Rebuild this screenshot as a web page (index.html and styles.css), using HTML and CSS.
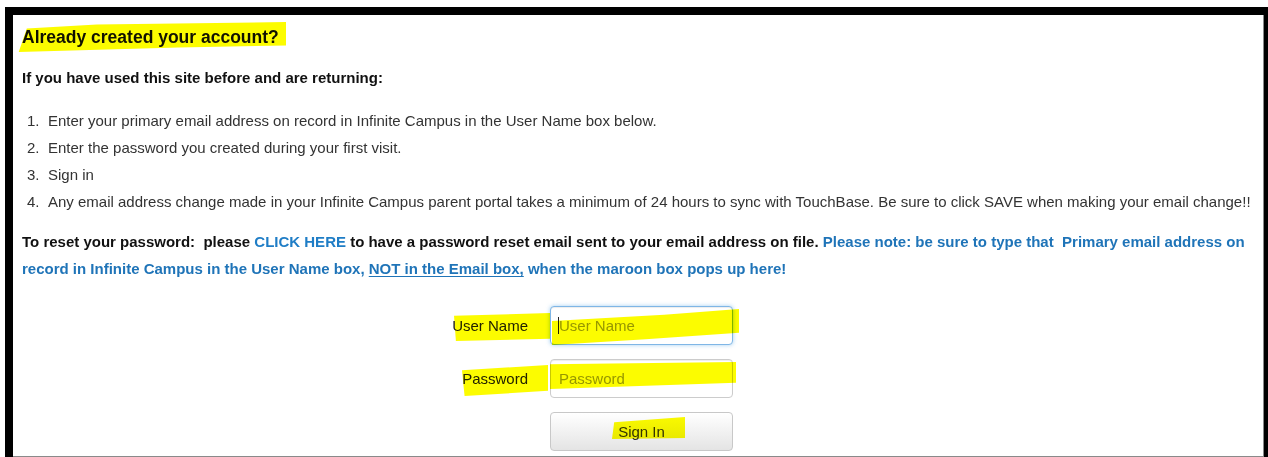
FILE: index.html
```html
<!DOCTYPE html>
<html lang="en">
<head>
<meta charset="utf-8">
<title>Sign In</title>
<link rel="stylesheet" href="styles.css">
</head>
<body>
<div class="frame">
  <div class="panel">
    <h3 class="title">Already created your account?</h3>
    <p class="intro">If you have used this site before and are returning:</p>
    <ol class="steps">
      <li>Enter your primary email address on record in Infinite Campus in the User Name box below.</li>
      <li>Enter the password you created during your first visit.</li>
      <li>Sign in</li>
      <li>Any email address change made in your Infinite Campus parent portal takes a minimum of 24 hours to sync with TouchBase. Be sure to click SAVE when making your email change!!</li>
    </ol>
    <p class="reset">To reset your password:&nbsp; please <a class="link" href="#">CLICK HERE</a> to have a password reset email sent to your email address on file. <span class="note">Please note: be sure to type that&nbsp; Primary email address on</span> <span class="note">record in Infinite Campus in the User Name box,</span> <u class="note">NOT in the Email box,</u> <span class="note">when the maroon box pops up here!</span></p>

    <form class="login">
      <label class="label" for="user">User Name</label>
      <span class="field">
        <input class="input is-focused" id="user" type="text" placeholder="User Name">
        <span class="caret"></span>
      </span>
      <label class="label" for="pass">Password</label>
      <span class="field">
        <input class="input" id="pass" type="password" placeholder="Password">
      </span>
      <span></span>
      <button class="btn" type="button">Sign In</button>
    </form>

    <!-- marker strokes drawn over the panel -->
    <span class="marker mk-title"></span>
    <span class="marker mk-user-label"></span>
    <span class="marker mk-user-input"></span>
    <span class="marker mk-pass-label"></span>
    <span class="marker mk-pass-input"></span>
    <span class="marker mk-btn"></span>
  </div>
</div>
</body>
</html>
```

FILE: styles.css
```css
* { box-sizing: border-box; }

html, body {
  margin: 0;
  padding: 0;
  background: #fff;
  height: 457px;
  overflow: hidden;
}

body {
  font-family: "Liberation Sans", Arial, sans-serif;
  color: #333;
}

.frame {
  margin: 7px 0 0 5px;
  width: 1263px;
  height: 450px;
  border-top: 8px solid #000;
  border-left: 8px solid #000;
  border-right: 4px solid #000;
  background: #000;
}

.panel {
  position: relative;
  height: 442px;
  background: #fff;
  border-right: 1px solid #8a8a8a;
  border-bottom: 1px solid #8a8a8a;
  padding: 9px 0 0 9px;
}

.title {
  margin: 0;
  font-size: 17.5px;
  line-height: 26px;
  font-weight: bold;
  color: #111;
}

.intro {
  margin: 18px 0 0;
  font-size: 15px;
  line-height: 20px;
  font-weight: bold;
  color: #111;
}

.steps {
  margin: 19px 0 0;
  padding: 0 0 0 5px;
  list-style: none;
  counter-reset: step;
  font-size: 15px;
  line-height: 27px;
  white-space: nowrap;
}

.steps li {
  counter-increment: step;
}

.steps li::before {
  content: counter(step) ".";
  display: inline-block;
  width: 21px;
}

.reset {
  margin: 13px 0 0;
  font-size: 15px;
  line-height: 27px;
  font-weight: bold;
  color: #111;
}

.link {
  color: #1f7dc6;
  text-decoration: none;
}

.note {
  color: #1f74b8;
}

u.note {
  text-decoration-thickness: 1px;
  text-underline-offset: 2px;
}

.login {
  display: grid;
  grid-template-columns: 506px 183px;
  column-gap: 22px;
  row-gap: 14px;
  margin-top: 24px;
  align-items: center;
}

.label {
  text-align: right;
  font-size: 15px;
  color: #222;
}

.field {
  position: relative;
  display: block;
}

.input {
  display: block;
  width: 183px;
  height: 39px;
  padding: 0 8px;
  font-family: inherit;
  font-size: 15px;
  color: #555;
  background: #fff;
  border: 1px solid #ccc;
  border-radius: 4px;
  box-shadow: inset 0 1px 1px rgba(0, 0, 0, 0.075);
  outline: none;
}

.input::placeholder {
  color: #999;
}

.input.is-focused {
  border-color: #7fb6e6;
  box-shadow: inset 0 1px 1px rgba(0, 0, 0, 0.075), 0 0 4px rgba(102, 175, 233, 0.6);
}

.caret {
  position: absolute;
  left: 8px;
  top: 11px;
  width: 1px;
  height: 17px;
  background: #222;
}

.btn {
  width: 183px;
  height: 39px;
  font-family: inherit;
  font-size: 15px;
  color: #333;
  background: linear-gradient(#ffffff, #e4e4e4);
  border: 1px solid #c8c8c8;
  border-radius: 4px;
  padding: 0;
}

/* highlighter strokes, multiplied over the content below */
.marker {
  position: absolute;
  background: #fcfc00;
  mix-blend-mode: multiply;
  pointer-events: none;
}

.mk-title {
  left: 3px;
  top: 7px;
  width: 270px;
  height: 30px;
  clip-path: polygon(4% 22%, 30% 8%, 100% 0%, 100% 78%, 60% 85%, 1% 100%);
}

.mk-user-label {
  left: 441px;
  top: 298px;
  width: 96px;
  height: 28px;
  clip-path: polygon(0% 10%, 100% 0%, 100% 92%, 2% 100%);
}

.mk-user-input {
  left: 539px;
  top: 294px;
  width: 187px;
  height: 36px;
  clip-path: polygon(0% 33%, 60% 16%, 100% 0%, 100% 66%, 50% 84%, 0% 100%);
}

.mk-pass-label {
  left: 449px;
  top: 350px;
  width: 86px;
  height: 31px;
  clip-path: polygon(0% 17%, 100% 0%, 100% 83%, 3% 100%);
}

.mk-pass-input {
  left: 537px;
  top: 347px;
  width: 186px;
  height: 27px;
  clip-path: polygon(0% 8%, 100% 0%, 100% 77%, 0% 100%);
}

.mk-btn {
  left: 599px;
  top: 402px;
  width: 73px;
  height: 22px;
  clip-path: polygon(3% 24%, 100% 0%, 100% 95%, 0% 100%);
}
```
